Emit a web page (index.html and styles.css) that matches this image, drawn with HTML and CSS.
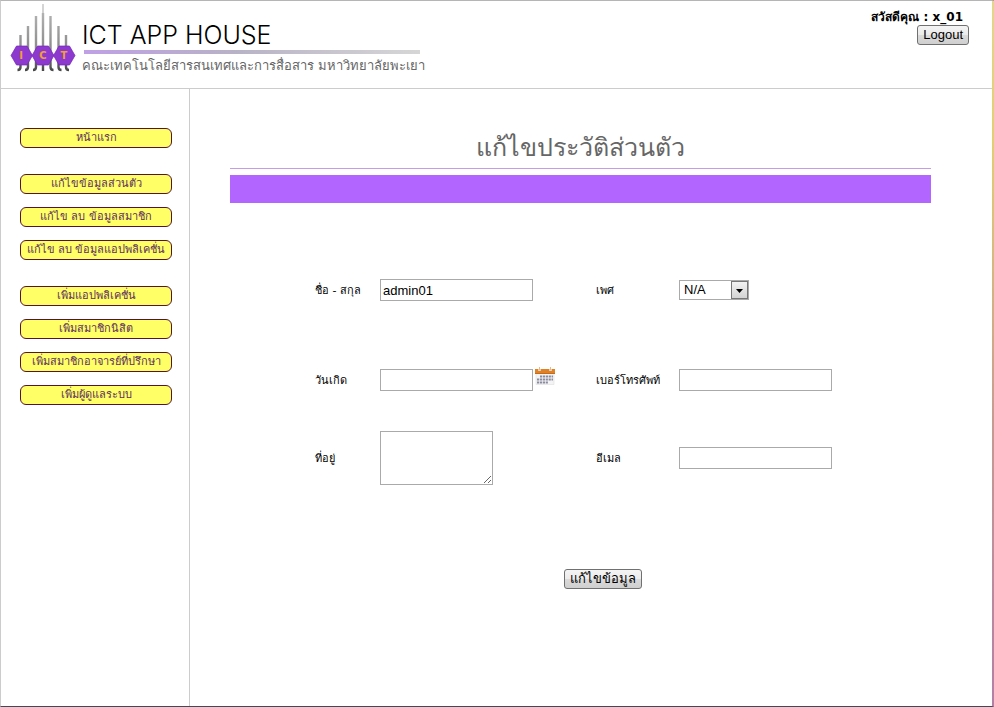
FILE: index.html
```html
<!DOCTYPE html>
<html lang="th">
<head>
<meta charset="utf-8">
<meta name="viewport" content="width=device-width, initial-scale=1">
<title>ICT APP HOUSE</title>
<link rel="stylesheet" href="styles.css">
</head>
<body>
<div class="page">
  <header class="header">
    <div class="brand">
      <svg class="logo" viewBox="0 0 66 68" aria-hidden="true">
        <defs>
          <linearGradient id="metal" x1="0" y1="0" x2="0" y2="68" gradientUnits="userSpaceOnUse">
            <stop offset="0" stop-color="#bbb"/>
            <stop offset="0.7" stop-color="#888"/>
            <stop offset="1" stop-color="#444"/>
          </linearGradient>
        </defs>
        <g fill="none" stroke="url(#metal)" stroke-width="2.4">
          <path d="M10.500 31V63q0 3-3 3M18 22V63q0 3-3 3M26 12V63q0 3-3 3M33 9V67M40.500 12V63q0 3 3 3M48.500 22V63q0 3 3 3M56 31V63q0 3 3 3"/>
          <path d="M33 0V10" stroke-width="1.200"/>
        </g>
        <g fill="#8d38cf" stroke="#7427b4" stroke-width="0.700">
          <path d="M1 51.500 6.500 42H17L22.500 51.500 17 61H6.500Z"/>
          <path d="M22 51.500 27.500 42H38.500L44 51.500 38.500 61H27.500Z"/>
          <path d="M43.500 51.500 49 42H59.500L65 51.500 59.500 61H49Z"/>
        </g>
        <g class="logo-text" text-anchor="middle">
          <text x="11" y="55">I</text>
          <text x="33" y="55">C</text>
          <text x="54" y="55">T</text>
        </g>
      </svg>
      <div class="brand-text">
        <div class="brand-name">ICT APP HOUSE</div>
        <div class="brand-rule"></div>
        <div class="brand-sub">คณะเทคโนโลยีสารสนเทศและการสื่อสาร มหาวิทยาลัยพะเยา</div>
      </div>
    </div>
    <div class="account">
      <span class="greeting">สวัสดีคุณ : x_01</span>
      <button class="button" type="button">Logout</button>
    </div>
  </header>

  <div class="body">
    <nav class="sidebar">
      <div class="nav-group">
        <a class="nav-link" href="#">หน้าแรก</a>
      </div>
      <div class="nav-group">
        <a class="nav-link" href="#">แก้ไขข้อมูลส่วนตัว</a>
        <a class="nav-link" href="#">แก้ไข ลบ ข้อมูลสมาชิก</a>
        <a class="nav-link" href="#">แก้ไข ลบ ข้อมูลแอปพลิเคชั่น</a>
      </div>
      <div class="nav-group">
        <a class="nav-link" href="#">เพิ่มแอปพลิเคชั่น</a>
        <a class="nav-link" href="#">เพิ่มสมาชิกนิสิต</a>
        <a class="nav-link" href="#">เพิ่มสมาชิกอาจารย์ที่ปรึกษา</a>
        <a class="nav-link" href="#">เพิ่มผู้ดูแลระบบ</a>
      </div>
    </nav>

    <main class="main">
      <h1 class="title">แก้ไขประวัติส่วนตัว</h1>
      <div class="band"></div>
      <form class="form">
        <div class="row row-first">
          <label for="name">ชื่อ - สกุล</label>
          <div class="field"><input class="input" id="name" type="text" value="admin01"></div>
          <label for="sex">เพศ</label>
          <div class="field select-box">
            <select class="select" id="sex"><option>N/A</option></select>
            <svg class="select-arrow" viewBox="0 0 15 16" aria-hidden="true">
              <path d="M4 7H11L7.500 11Z"/>
            </svg>
          </div>
        </div>
        <div class="row">
          <label for="birth">วันเกิด</label>
          <div class="field">
            <input class="input" id="birth" type="text">
            <button class="calendar" type="button" aria-label="ปฏิทิน">
              <svg viewBox="0 0 22 20" width="22" height="20">
                <path d="M2 6H20V18.500H2Z" fill="#f4f4f4" stroke="#ddd" stroke-width="0.600"/>
                <path d="M1 3H21V8H1Z" fill="#df8126"/>
                <path d="M1 7.500H21" stroke="#c96a17"/>
                <path d="M5.500 1V5M16.500 1V5" stroke="#fff" stroke-width="2.200"/>
                <path d="M5.500 1V4.500M16.500 1V4.500" stroke="#e6b98c" stroke-width="1"/>
                <path d="M6 10.500H19M3 13.500H19M3 16.500H14" stroke="#8b8ba0" stroke-width="2" stroke-dasharray="2.200 0.700"/>
              </svg>
            </button>
          </div>
          <label for="phone">เบอร์โทรศัพท์</label>
          <div class="field"><input class="input" id="phone" type="tel"></div>
        </div>
        <div class="row">
          <label for="address">ที่อยู่</label>
          <div class="field"><textarea class="textarea" id="address"></textarea></div>
          <label for="email">อีเมล</label>
          <div class="field"><input class="input" id="email" type="email"></div>
        </div>
        <div class="actions"><button class="button" type="submit">แก้ไขข้อมูล</button></div>
      </form>
    </main>
  </div>
</div>
</body>
</html>
```
FILE: styles.css
```css
* {
  box-sizing: border-box;
}

body {
  margin: 0;
  background: #fff;
  color: #000;
  font-family: "DejaVu Sans", sans-serif;
  font-size: 11px;
}

.page {
  display: flex;
  flex-direction: column;
  min-height: 100vh;
  border-style: solid;
  border-width: 1px 2px 1px 1px;
  border-color: #b5b5b5 #b884a8 #3e4a56 #ccc;
  position: relative;
}

.page::after {
  content: "";
  position: absolute;
  top: 0;
  right: -2px;
  bottom: 0;
  width: 2px;
  background: linear-gradient(#e4d68a, #e2cf70 20%, #c79a92 60%, #b47fa6);
}

.header {
  display: flex;
  justify-content: space-between;
  height: 88px;
  border-bottom: 1px solid #ccc;
}

.brand {
  display: flex;
  padding: 3px 0 0 9px;
}

.logo {
  width: 66px;
  height: 68px;
}

.logo-text {
  fill: #f0a030;
  font: bold 10px "DejaVu Sans", sans-serif;
}

.brand-text {
  width: 338px;
  margin-left: 6px;
  padding-top: 16px;
}

.brand-name {
  font: 300 25px/30px Inter, sans-serif;
}

.brand-rule {
  height: 4px;
  margin-left: 2px;
  background: linear-gradient(90deg, #bfa0e6, #b8b2c6 45%, #d6d6d6);
}

.brand-sub {
  color: #666;
  font: 300 13px/24px "Liberation Sans", sans-serif;
  white-space: nowrap;
}

.account {
  display: flex;
  flex-direction: column;
  align-items: flex-end;
  padding: 8px 23px 0 0;
}

.greeting {
  margin-right: 6px;
  font-size: 12px;
  font-weight: bold;
  line-height: 16px;
}

.button {
  height: 20px;
  padding: 0 5px;
  border: 1px solid #707070;
  border-radius: 3px;
  background: linear-gradient(#f4f4f4, #ebebeb 50%, #dadada 51%, #cfcfcf);
  color: #000;
  font: 13px/18px "Liberation Sans", sans-serif;
}

.body {
  display: flex;
  flex: 1;
}

.sidebar {
  display: flex;
  flex-direction: column;
  gap: 26px;
  width: 189px;
  padding: 39px 17px 0 19px;
  border-right: 1px solid #ccc;
}

.nav-group {
  display: flex;
  flex-direction: column;
  gap: 13px;
}

.nav-link {
  height: 20px;
  border: 1px solid #59152d;
  border-radius: 6px;
  background: #ff6;
  color: #603060;
  font-size: 11px;
  line-height: 17px;
  text-align: center;
  text-decoration: none;
  white-space: nowrap;
}

.main {
  flex: 1;
  padding: 36px 61px 0 40px;
}

.title {
  height: 44px;
  margin: 0 0 6px;
  border-bottom: 1px solid #c79be6;
  color: #666;
  font: 300 25px/44px "Liberation Sans", sans-serif;
  text-align: center;
}

.band {
  height: 28px;
  background: #b266ff;
}

.form {
  padding: 76px 0 0 85px;
}

.row {
  display: grid;
  grid-template-columns: 65px 216px 83px 1fr;
  align-items: center;
  margin-bottom: 40px;
}

.row-first {
  margin-bottom: 68px;
}

.field {
  display: flex;
  align-items: center;
}

.input,
.select,
.textarea {
  border: 1px solid #aaa;
  border-radius: 0;
  background: #fff;
  color: #000;
  font: 13px/18px "Liberation Sans", sans-serif;
}

.input {
  width: 153px;
  height: 22px;
  padding: 1px 2px;
}

.select-box {
  position: relative;
  width: 70px;
}

.select {
  width: 100%;
  height: 20px;
  padding: 0 4px;
  appearance: none;
}

.select-arrow {
  position: absolute;
  top: 1px;
  right: 1px;
  width: 17px;
  height: 18px;
  border: 1px solid #777;
  background: linear-gradient(#f2f2f2, #d4d4d4);
  pointer-events: none;
}

.textarea {
  display: block;
  width: 113px;
  height: 54px;
  resize: both;
}

.calendar {
  width: 22px;
  height: 20px;
  margin: -6px 0 2px 1px;
  padding: 0;
  border: 0;
  background: none;
}

.calendar svg {
  display: block;
}

.actions {
  display: flex;
  justify-content: center;
  padding: 44px 40px 0 0;
}
```
